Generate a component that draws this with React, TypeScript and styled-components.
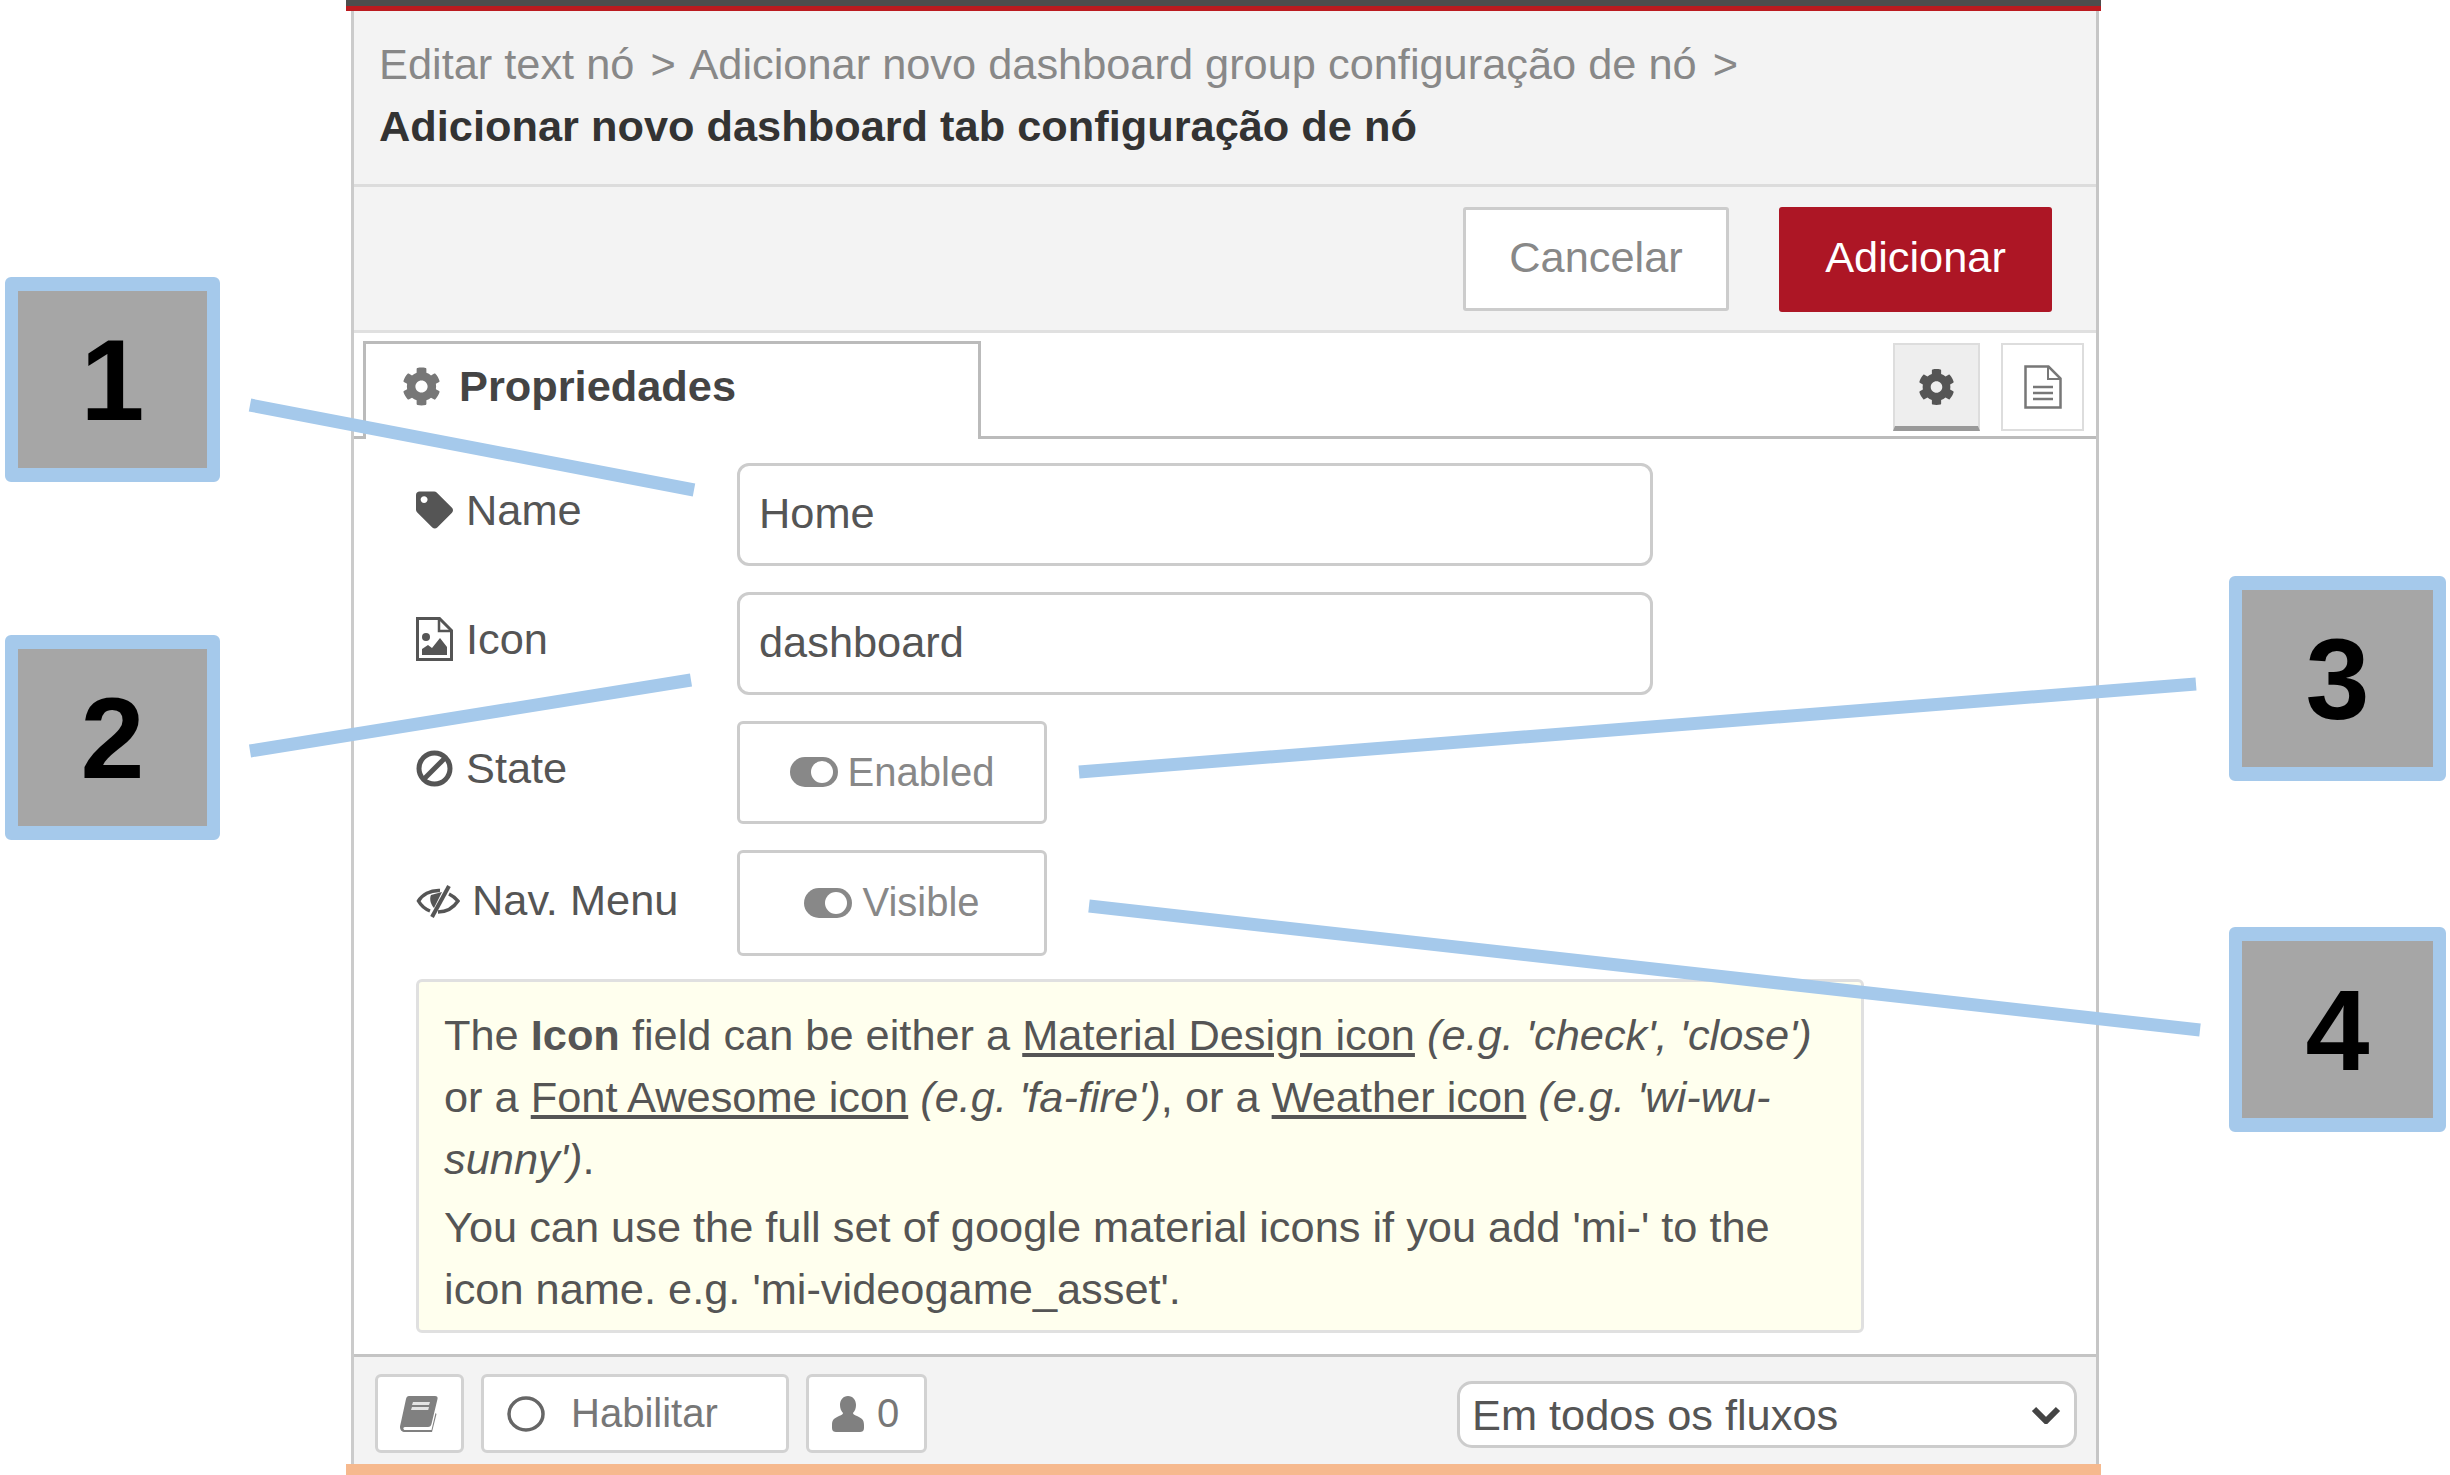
import * as React from "react";
import styled, { createGlobalStyle } from "styled-components";
import { FaCog, FaTag } from "react-icons/fa";

const GlobalStyle = createGlobalStyle`
    html, body {
        margin: 0;
        background: #fff;
    }
    body {
        width: 2450px;
        height: 1475px;
        overflow: hidden;
        font-family: "Liberation Sans", Arial, sans-serif;
        color: #555;
    }
    * {
        box-sizing: border-box;
    }
`;

const Page = styled.div`
    position: relative;
    display: flex;
    width: 2450px;
    height: 1475px;
`;

const CalloutRail = styled.div<{ $left: number; $top: number; $gap: number; $width: number }>`
    display: flex;
    flex-direction: column;
    flex: none;
    width: ${(p) => p.$width}px;
    padding: ${(p) => p.$top}px 0 0 ${(p) => p.$left}px;
    gap: ${(p) => p.$gap}px;
`;

const Callout = styled.div<{ $wide?: boolean }>`
    display: flex;
    align-items: center;
    justify-content: center;
    width: ${(p) => (p.$wide ? 217 : 215)}px;
    height: 205px;
    background: #a6a6a6;
    border: 13px solid #a5c9eb;
    border-top-width: 14px;
    border-bottom-width: 14px;
    border-radius: 6px;
    color: #000;
    font-size: 115px;
    font-weight: 700;
`;

const CalloutLines = styled.svg`
    position: absolute;
    top: 0;
    left: 0;
    pointer-events: none;
`;

const Dialog = styled.div`
    display: flex;
    flex-direction: column;
    flex: none;
    width: 1755px;
    height: 1475px;
    border-top: 6px solid #4d4d4d;
    border-bottom: 11px solid #f6b98e;
`;

const TopRule = styled.div`
    flex: none;
    height: 5px;
    background: #bb1a1f;
`;

const Panel = styled.div`
    display: flex;
    flex-direction: column;
    flex: 1;
    margin: 0 2px 0 5px;
    border-left: 3px solid #cbcbcb;
    border-right: 3px solid #c6c6c6;
`;

const Breadcrumbs = styled.div`
    height: 176px;
    padding: 22px 0 0 25px;
    background: #f3f3f3;
    border-bottom: 3px solid #dcdcdc;
    font-size: 43.35px;
    line-height: 62px;
    color: #888;
    white-space: nowrap;
`;

const CrumbSeparator = styled.span`
    margin: 0 4px;
`;

const CurrentCrumb = styled.div`
    font-weight: 700;
    color: #333;
`;

const Toolbar = styled.div`
    display: flex;
    align-items: center;
    justify-content: flex-end;
    gap: 50px;
    height: 146px;
    padding: 0 44px 0 0;
    background: #f3f3f3;
    border-bottom: 3px solid #e0e0e0;
`;

const ToolbarButton = styled.div<{ $primary?: boolean }>`
    display: flex;
    align-items: center;
    justify-content: center;
    width: ${(p) => (p.$primary ? 273 : 266)}px;
    height: ${(p) => (p.$primary ? 105 : 104)}px;
    margin-top: 1px;
    padding-bottom: 4px;
    background: ${(p) => (p.$primary ? "#ad1625" : "#fff")};
    border: ${(p) => (p.$primary ? "none" : "3px solid #ccc")};
    border-radius: 3px;
    color: ${(p) => (p.$primary ? "#fff" : "#888")};
    font-size: 43.35px;
`;

const TabBar = styled.div`
    display: flex;
    justify-content: space-between;
    height: 106px;
    padding: 8px 12px 0 9px;
    background: #fff;
    border-bottom: 3px solid #bbb;
`;

const Tab = styled.div`
    display: flex;
    align-items: center;
    gap: 18px;
    width: 618px;
    height: 98px;
    padding: 0 0 10px 36px;
    background: #fff;
    border: 3px solid #bbb;
    border-bottom: none;
    font-size: 43.35px;
    font-weight: 700;
    color: #444;
`;

const TabIcon = styled.div<{ $active?: boolean }>`
    display: flex;
    align-items: center;
    justify-content: center;
    width: ${(p) => (p.$active ? 87 : 83)}px;
    height: 88px;
    margin-top: 2px;
    padding-top: ${(p) => (p.$active ? 2 : 0)}px;
    background: ${(p) => (p.$active ? "#eee" : "#fff")};
    border: 2px solid #ddd;
    border-bottom: ${(p) => (p.$active ? "5px solid #999" : "2px solid #ddd")};
    color: ${(p) => (p.$active ? "#555" : "#777")};
`;

const TabIconGroup = styled.div`
    display: flex;
    gap: 21px;
`;

const Glyph = styled.span<{ $w: number; $h: number; $color?: string }>`
    display: flex;
    flex: none;
    width: ${(p) => p.$w}px;
    height: ${(p) => p.$h}px;
    color: ${(p) => p.$color || "inherit"};

    & svg {
        width: 100%;
        height: 100%;
        display: block;
    }
`;

const Form = styled.div`
    display: flex;
    flex-direction: column;
    flex: 1;
    gap: 26px;
    padding: 24px 0 0 62px;
    background: #fff;
`;

const Row = styled.div`
    display: flex;
    align-items: center;
`;

const RowLabel = styled.label<{ $low?: boolean }>`
    display: flex;
    align-items: center;
    gap: ${(p) => (p.$low ? 12 : 13)}px;
    flex: none;
    width: 321px;
    padding-bottom: ${(p) => (p.$low ? 5 : 9)}px;
    font-size: 43.35px;
    color: #555;
`;

const TextInput = styled.input`
    width: 916px;
    height: 103px;
    padding: 0 20px 3px 19px;
    background: #fff;
    border: 3px solid #ccc;
    border-radius: 12px;
    outline: none;
    font-family: inherit;
    font-size: 43.35px;
    color: #555;
`;

const ToggleButton = styled.div<{ $tall?: boolean }>`
    display: flex;
    align-items: center;
    justify-content: center;
    gap: 10px;
    width: 310px;
    height: ${(p) => (p.$tall ? 106 : 103)}px;
    padding-bottom: 1px;
    border: 3px solid #ccc;
    border-radius: 6px;
    font-size: 40px;
    color: #888;
`;

const Tips = styled.div`
    width: 1448px;
    height: 354px;
    margin-top: -3px;
    padding: 22px 20px 0 25px;
    background: #ffffee;
    border: 3px solid #e0e0e0;
    border-radius: 6px;
    font-size: 43.35px;
    line-height: 62px;
    color: #555;
    white-space: nowrap;

    & a {
        color: inherit;
        text-decoration: underline;
    }
`;

const TipsNote = styled.div`
    margin-top: 6px;
`;

const Footer = styled.div`
    display: flex;
    align-items: center;
    justify-content: space-between;
    height: 110px;
    padding: 6px 19px 0 21px;
    background: #f3f3f3;
    border-top: 3px solid #c4c4c4;
`;

const FooterGroup = styled.div`
    display: flex;
    gap: 17px;
`;

const FooterButton = styled.div<{ $width: number; $gap?: number; $pad?: number }>`
    display: flex;
    align-items: center;
    justify-content: ${(p) => (p.$pad ? "flex-start" : "center")};
    gap: ${(p) => p.$gap || 0}px;
    width: ${(p) => p.$width}px;
    height: 79px;
    padding-left: ${(p) => p.$pad || 0}px;
    background: #fff;
    border: 3px solid #d2d2d2;
    border-radius: 6px;
    font-size: 40px;
    color: #777;
`;

const Select = styled.div`
    display: flex;
    align-items: center;
    justify-content: space-between;
    width: 620px;
    height: 67px;
    margin-top: 1px;
    padding: 2px 13px 0 12px;
    background: #fff;
    border: 3px solid #ccc;
    border-radius: 15px;
    font-size: 43.35px;
    color: #555;
`;

const BookIcon = () => (
    <svg viewBox="0 0 39 36">
        <path fill="#808080" d="M9 0h26c2 0 3 1 2.500 3l-6 25c-.5 2-1.500 3-3.500 3H5c-1.500 0-2 1-1.500 2s1 1 2 1h26l4-17 1 1-4.500 18H5C2 36 0 34 0 31c0-1 .5-3 1-5L6 3c.4-2 1.500-3 3-3z" />
        <path fill="#e4e4e4" d="M13 6h17l-1 3H12zM12 11h17l-.8 3H11z" />
    </svg>
);

const UserIcon = () => (
    <svg viewBox="0 0 32 36">
        <path fill="#808080" d="M16 0c5 0 8 4 8 9 0 3-1 6-3 8 0 1 1 2 4 3 4 2 7 3 7 9v3c0 3-2 4-4 4H4c-2 0-4-1-4-4v-3c0-6 3-7 7-9 3-1 4-2 4-3-2-2-3-5-3-8 0-5 3-9 8-9z" />
    </svg>
);

const EyeOffIcon = () => (
    <svg viewBox="0 0 44 34">
        <path fill="none" stroke="#555" strokeWidth="3.500" d="M24 6.500C14 6 6 11 2.500 17 5 21.500 9 25 14 27" />
        <path fill="none" stroke="#555" strokeWidth="3.500" d="M33 10c4 2 7 4.500 9 7-4 6-11 11-20 11" />
        <path fill="#555" d="M15 11l11-3-8 16c-3-3-5-9-3-13z" />
        <path fill="none" stroke="#555" strokeWidth="4" d="M33 2L16 33" />
    </svg>
);

const BanIcon = () => (
    <svg viewBox="0 0 37 37">
        <circle cx="18.500" cy="18.500" r="15.500" fill="none" stroke="#555" strokeWidth="5" />
        <path fill="none" stroke="#555" strokeWidth="5" d="M29 8L8 29" />
    </svg>
);

const ImageFileIcon = () => (
    <svg viewBox="0 0 37 44">
        <path fill="none" stroke="#555" strokeWidth="3" d="M1.500 1.500h22l12 12v29h-34z" />
        <path fill="none" stroke="#555" strokeWidth="2.500" d="M23 2v12h12" />
        <circle cx="10" cy="20" r="4" fill="#555" />
        <path fill="#555" d="M6 38v-6l6-4 4 3 8-10 7 9v8z" />
    </svg>
);

const TextFileIcon = () => (
    <svg viewBox="0 0 38 44">
        <path fill="none" stroke="#777" strokeWidth="2.500" d="M1.500 1.500h23l12 12v29h-35z" />
        <path fill="none" stroke="#777" strokeWidth="2" d="M24 2v12h12" />
        <path fill="none" stroke="#777" strokeWidth="2.500" d="M9 22h20M9 28h20M9 34h20" />
    </svg>
);

const ToggleIcon = () => (
    <svg viewBox="0 0 48 30">
        <rect width="48" height="30" rx="15" fill="#888" />
        <ellipse cx="32" cy="15" rx="11" ry="11" fill="#fff" />
    </svg>
);

const ChevronIcon = () => (
    <svg viewBox="0 0 30 18">
        <path fill="none" stroke="#444" strokeWidth="6" d="M3 3l12 12L27 3" />
    </svg>
);

const RingIcon = () => (
    <svg viewBox="0 0 38 36">
        <ellipse cx="19" cy="18" rx="17" ry="16" fill="none" stroke="#666" strokeWidth="3.500" />
    </svg>
);

const callouts = [
    { x1: 250, y1: 405, x2: 694, y2: 490 },
    { x1: 250, y1: 751, x2: 691, y2: 680 },
    { x1: 1079, y1: 772, x2: 2196, y2: 684 },
    { x1: 1089, y1: 906, x2: 2200, y2: 1030 },
];

const App = () => {
    return (
        <Page>
            <GlobalStyle />
            <CalloutRail $width={346} $left={5} $top={277} $gap={153}>
                <Callout>1</Callout>
                <Callout>2</Callout>
            </CalloutRail>
            <Dialog>
                <TopRule />
                <Panel>
                    <Breadcrumbs>
                        <div>
                            Editar text nó <CrumbSeparator>&gt;</CrumbSeparator> Adicionar novo dashboard group configuração de nó <CrumbSeparator>&gt;</CrumbSeparator>
                        </div>
                        <CurrentCrumb>Adicionar novo dashboard tab configuração de nó</CurrentCrumb>
                    </Breadcrumbs>
                    <Toolbar>
                        <ToolbarButton>Cancelar</ToolbarButton>
                        <ToolbarButton $primary>Adicionar</ToolbarButton>
                    </Toolbar>
                    <TabBar>
                        <Tab>
                            <Glyph $w={39} $h={39} $color="#777"><FaCog /></Glyph>
                            Propriedades
                        </Tab>
                        <TabIconGroup>
                            <TabIcon $active>
                                <Glyph $w={37} $h={38}><FaCog /></Glyph>
                            </TabIcon>
                            <TabIcon>
                                <Glyph $w={38} $h={44}><TextFileIcon /></Glyph>
                            </TabIcon>
                        </TabIconGroup>
                    </TabBar>
                    <Form>
                        <Row>
                            <RowLabel>
                                <Glyph $w={37} $h={38}><FaTag /></Glyph>
                                Name
                            </RowLabel>
                            <TextInput readOnly value="Home" />
                        </Row>
                        <Row>
                            <RowLabel>
                                <Glyph $w={37} $h={44}><ImageFileIcon /></Glyph>
                                Icon
                            </RowLabel>
                            <TextInput readOnly value="dashboard" />
                        </Row>
                        <Row>
                            <RowLabel>
                                <Glyph $w={37} $h={37}><BanIcon /></Glyph>
                                State
                            </RowLabel>
                            <ToggleButton>
                                <Glyph $w={48} $h={30}><ToggleIcon /></Glyph>
                                Enabled
                            </ToggleButton>
                        </Row>
                        <Row>
                            <RowLabel $low>
                                <Glyph $w={44} $h={34}><EyeOffIcon /></Glyph>
                                Nav. Menu
                            </RowLabel>
                            <ToggleButton $tall>
                                <Glyph $w={48} $h={30}><ToggleIcon /></Glyph>
                                Visible
                            </ToggleButton>
                        </Row>
                        <Tips>
                            The <b>Icon</b> field can be either a <a>Material Design icon</a> <i>(e.g. 'check', 'close')</i>
                            <br />
                            or a <a>Font Awesome icon</a> <i>(e.g. 'fa-fire')</i>, or a <a>Weather icon</a> <i>(e.g. 'wi-wu-</i>
                            <br />
                            <i>sunny')</i>.
                            <TipsNote>
                                You can use the full set of google material icons if you add 'mi-' to the
                                <br />
                                icon name. e.g. 'mi-videogame_asset'.
                            </TipsNote>
                        </Tips>
                    </Form>
                    <Footer>
                        <FooterGroup>
                            <FooterButton $width={89}>
                                <Glyph $w={39} $h={36}><BookIcon /></Glyph>
                            </FooterButton>
                            <FooterButton $width={308} $pad={23} $gap={26}>
                                <Glyph $w={38} $h={36}><RingIcon /></Glyph>
                                Habilitar
                            </FooterButton>
                            <FooterButton $width={121} $pad={23} $gap={13}>
                                <Glyph $w={32} $h={36}><UserIcon /></Glyph>
                                0
                            </FooterButton>
                        </FooterGroup>
                        <Select>
                            Em todos os fluxos
                            <Glyph $w={30} $h={18}><ChevronIcon /></Glyph>
                        </Select>
                    </Footer>
                </Panel>
            </Dialog>
            <CalloutRail $width={349} $left={128} $top={576} $gap={146}>
                <Callout $wide>3</Callout>
                <Callout $wide>4</Callout>
            </CalloutRail>
            <CalloutLines width={2450} height={1475}>
                {callouts.map((line) => (
                    <line key={line.x1 + "-" + line.y1} {...line} stroke="#a5c9eb" strokeWidth={13} />
                ))}
            </CalloutLines>
        </Page>
    );
};

export default App;
